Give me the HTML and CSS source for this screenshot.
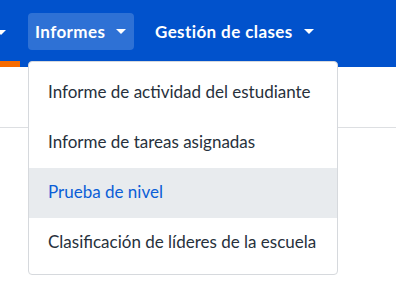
FILE: index.html
```html
<!DOCTYPE html>
<html lang="es">
<head>
<meta charset="UTF-8">
<title>Informes</title>
<link rel="stylesheet" href="styles.css">
</head>
<body>

<header class="topbar">
  <nav class="nav">
    <div class="nav-item nav-cut">
      <span class="caret"></span>
      <span class="active-line"></span>
    </div>
    <div class="nav-item open">
      <span class="nav-label">Informes</span>
      <span class="caret"></span>
    </div>
    <div class="nav-item">
      <span class="nav-label">Gestión de clases</span>
      <span class="caret"></span>
    </div>
  </nav>
</header>

<div class="page">
  <div class="page-rule"></div>
</div>

<!-- menú desplegable de Informes -->
<ul class="dropdown">
  <li class="menu-item">Informe de actividad del estudiante</li>
  <li class="menu-item">Informe de tareas asignadas</li>
  <li class="menu-item current">Prueba de nivel</li>
  <li class="menu-item">Clasificación de líderes de la escuela</li>
</ul>

</body>
</html>
```

FILE: styles.css
```css
* {
  box-sizing: border-box;
}

body {
  margin: 0;
  background-color: #fff;
  font-family: Lato, "Noto Sans", Arial, sans-serif;
  color: #27313c;
}

.topbar {
  height: 67px;
  background-color: #0152cc;
}

.nav {
  display: flex;
  align-items: flex-start;
  height: 100%;
}

.nav-item {
  display: flex;
  align-items: center;
  height: 37px;
  margin-top: 13px;
  padding: 0 7px;
  border-radius: 4px;
  color: #fff;
  font-size: 17px;
  font-weight: 700;
  letter-spacing: 0.4px;
}

.nav-item .caret {
  width: 0;
  height: 0;
  margin-left: 11px;
  border-left: 5px solid transparent;
  border-right: 5px solid transparent;
  border-top: 5px solid #fff;
}

/* 左端で切れている項目 */
.nav-cut {
  position: relative;
  width: 28px;
  height: 54px;
  padding: 0;
  margin-top: 13px;
  align-items: flex-start;
  border-radius: 0;
}

.nav-cut .caret {
  margin: 17px 0 0 -4px;
}

.nav-cut .active-line {
  position: absolute;
  left: 0;
  bottom: 0;
  width: 20px;
  height: 6px;
  background-color: #f76b00;
}

.open {
  background-color: rgba(255, 255, 255, 0.18);
  width: 106px;
}

.nav-item + .nav-item + .nav-item {
  margin-left: 14px;
}

.page {
  height: 236px;
  padding-top: 60px;
}

.page-rule {
  border-top: 1px solid #dddfe2;
}

.dropdown {
  position: absolute;
  top: 61px;
  left: 28px;
  width: 310px;
  margin: 0;
  padding: 6px 0;
  list-style: none;
  background-color: #fff;
  border: 1px solid #d6d9dd;
  border-radius: 4px;
}

.menu-item {
  display: flex;
  align-items: center;
  height: 50px;
  padding-left: 19px;
  padding-bottom: 3px;
  font-size: 17px;
  white-space: nowrap;
}

.current {
  background-color: #e8ebee;
  color: #0b5ed7;
}
```
